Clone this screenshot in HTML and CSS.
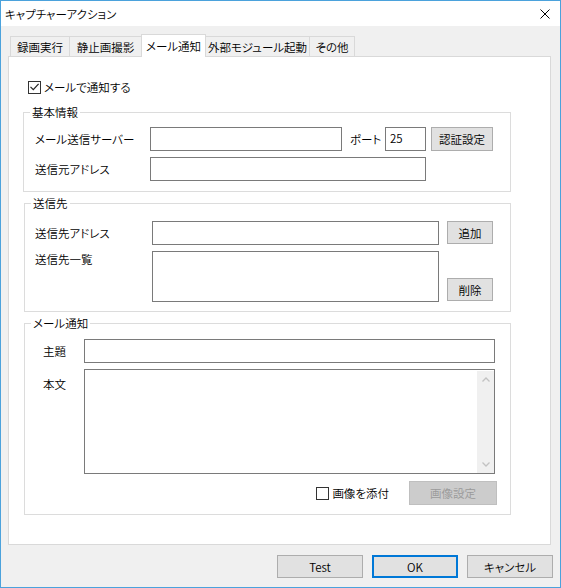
FILE: index.html
```html
<!DOCTYPE html>
<html lang="ja">
<head>
<meta charset="utf-8">
<title>キャプチャーアクション</title>
<link rel="stylesheet" href="styles.css">
</head>
<body>
<div class="window">
  <div class="titlebar">
    <span class="title">キャプチャーアクション</span>
    <svg class="close" width="10" height="10" viewBox="0 0 10 10"><path d="M0.5 0.5 L9.5 9.5 M9.5 0.5 L0.5 9.5" stroke="#000" stroke-width="1" fill="none"/></svg>
  </div>
  <div class="client">
    <div class="tabs">
      <div class="tab tab-rec">録画実行</div>
      <div class="tab tab-still">静止画撮影</div>
      <div class="tab tab-mail active">メール通知</div>
      <div class="tab tab-ext">外部モジュール起動</div>
      <div class="tab tab-other">その他</div>
    </div>
    <div class="panel">
      <label class="check top-check"><span class="box"><svg width="11" height="11" viewBox="0 0 11 11"><polyline points="1.5,4.8 4.3,7.6 9.6,1.8" fill="none" stroke="#222" stroke-width="1.2"/></svg></span>メールで通知する</label>

      <fieldset class="group g1">
        <legend>基本情報</legend>
        <div class="row">
          <span class="lbl lbl-basic">メール送信サーバー</span>
          <input class="field in-server" type="text" value="">
          <span class="port-label">ポート</span>
          <input class="field in-port" type="text" value="25">
          <button class="btn btn-auth">認証設定</button>
        </div>
        <div class="row">
          <span class="lbl lbl-basic">送信元アドレス</span>
          <input class="field in-from" type="text" value="">
        </div>
      </fieldset>

      <fieldset class="group g2">
        <legend>送信先</legend>
        <div class="row">
          <span class="lbl lbl-dest">送信先アドレス</span>
          <input class="field in-to" type="text" value="">
          <button class="btn btn-small btn-add">追加</button>
        </div>
        <div class="row row-top">
          <span class="lbl lbl-dest">送信先一覧</span>
          <div class="listbox"></div>
          <button class="btn btn-small btn-del">削除</button>
        </div>
      </fieldset>

      <fieldset class="group g3">
        <legend>メール通知</legend>
        <div class="row">
          <span class="lbl lbl-mail">主題</span>
          <input class="field in-subject" type="text" value="">
        </div>
        <div class="row row-top">
          <span class="lbl lbl-mail lbl-body">本文</span>
          <div class="textbox">
            <div class="textbox-content"></div>
            <div class="vscroll">
              <span class="arrow"><svg width="8" height="5" viewBox="0 0 8 5"><path d="M0.5 4.5 L4 1 L7.5 4.5" fill="none" stroke="#c2c2c2" stroke-width="1.3"/></svg></span>
              <span class="arrow"><svg width="8" height="5" viewBox="0 0 8 5"><path d="M0.5 0.5 L4 4 L7.5 0.5" fill="none" stroke="#c2c2c2" stroke-width="1.3"/></svg></span>
            </div>
          </div>
        </div>
        <div class="row row-end">
          <label class="check attach"><span class="box"></span>画像を添付</label>
          <button class="btn btn-img" disabled>画像設定</button>
        </div>
      </fieldset>
    </div>
    <div class="footer">
      <button class="btn btn-foot">Test</button>
      <button class="btn btn-foot btn-default">OK</button>
      <button class="btn btn-foot">キャンセル</button>
    </div>
  </div>
</div>
</body>
</html>
```
FILE: styles.css
```css
* { box-sizing: border-box; }
html, body { margin: 0; padding: 0; }
body {
  width: 561px;
  height: 588px;
  overflow: hidden;
  background: #fff;
  color: #000;
  font-family: "Noto Sans CJK JP", "Noto Sans", sans-serif;
  font-size: 11.5px;
  font-weight: 350;
  line-height: 16px;
  font-feature-settings: "palt";
}
.window {
  width: 561px;
  height: 588px;
  border: 1px solid #4ba2dc;
  background: #f0f0f0;
  display: flex;
  flex-direction: column;
}
.titlebar {
  flex: none;
  height: 25px;
  background: #fff;
  display: flex;
  align-items: center;
  justify-content: space-between;
  padding: 0 10px 0 4px;
}
.close { display: block; }
.client {
  flex: 1;
  min-height: 0;
  display: flex;
  flex-direction: column;
  padding: 8px 7px 9px 7px;
}
.tabs {
  flex: none;
  height: 22px;
  display: flex;
  align-items: flex-end;
  padding-left: 2px;
}
.tab {
  height: 20px;
  border: 1px solid #d9d9d9;
  border-bottom: none;
  margin-left: -1px;
  background: #f0f0f0;
  display: flex;
  align-items: center;
  justify-content: center;
  white-space: nowrap;
}
.tab:first-child { margin-left: 0; }
.tab-rec { width: 60px; }
.tab-still { width: 73px; }
.tab-mail { width: 65px; }
.tab-ext { width: 105px; }
.tab-other { width: 46px; }
.tab.active {
  height: 23px;
  margin-bottom: -1px;
  background: #fff;
  position: relative;
  z-index: 1;
}
.panel {
  flex: 1;
  min-height: 0;
  margin-right: 2px;
  background: #fff;
  border: 1px solid #d9d9d9;
}
.check {
  display: flex;
  align-items: center;
  width: max-content;
  height: 16px;
  white-space: nowrap;
}
.box {
  width: 13px;
  height: 13px;
  border: 1px solid #333;
  background: #fff;
  margin-right: 3px;
  display: flex;
}
.box svg { display: block; }
.top-check { margin: 22px 0 0 19px; }

.group {
  margin: 3px 0 0 15px;
  width: 487px;
  padding: 0;
  border: 1px solid #dcdcdc;
  min-inline-size: 0;
}
.group legend {
  margin-left: 6px;
  padding: 0 2px;
  height: 16px;
  line-height: 16px;
}
.g1 { margin: 9px 0 0 14px; width: 488px; padding: 7px 0 10px 0; }
.g2 { padding: 10px 0 9px 0; }
.g3 { padding: 8px 13px 9px 0; }
.g1 .row { padding-left: 11px; }
.g2 .row { padding-left: 10px; }
.g3 .row { padding-left: 18px; }

.row {
  display: flex;
  align-items: center;
  min-height: 24px;
}
.row + .row { margin-top: 6px; }
.row-top { align-items: flex-start; }
.row-end { justify-content: flex-end; }
.g3 .row-end { margin-top: 7px; }

.lbl { flex: none; white-space: nowrap; }
.lbl-basic { width: 115px; }
.lbl-dest { width: 117px; }
.lbl-mail { width: 41px; }
.lbl-body { margin-top: 7px; }

.field {
  flex: none;
  height: 24px;
  border: 1px solid #7a7a7a;
  background: #fff;
  padding: 0 4px;
  margin: 0;
  font: inherit;
  font-feature-settings: "palt";
  color: #000;
  outline: none;
}
.in-server { width: 192px; }
.port-label { margin-left: 8px; width: 35px; white-space: nowrap; }
.in-port { width: 41px; padding-bottom: 3px; }
.in-from { width: 276px; }
.in-to { width: 287px; }
.in-subject { width: 411px; }
.listbox {
  width: 287px;
  height: 51px;
  border: 1px solid #7a7a7a;
  background: #fff;
}
.textbox {
  width: 411px;
  height: 105px;
  border: 1px solid #7a7a7a;
  background: #fff;
  display: flex;
  padding-top: 1px;
}
.textbox-content { flex: 1; }
.vscroll {
  width: 17px;
  background: #f0f0f0;
  display: flex;
  flex-direction: column;
  justify-content: space-between;
}
.arrow {
  height: 17px;
  display: flex;
  align-items: center;
  justify-content: center;
}
.arrow svg { display: block; }

.btn {
  flex: none;
  margin: 0;
  padding: 0;
  font: inherit;
  font-feature-settings: "palt";
  color: #000;
  background: #e1e1e1;
  border: 1px solid #adadad;
  height: 24px;
  line-height: 16px;
}
.btn-auth { width: 62px; margin-left: 5px; }
.btn-small { width: 46px; height: 23px; margin-left: 8px; }
.btn-add { margin-top: -1px; }
.btn-del { align-self: flex-end; margin-bottom: 1px; }
.attach { margin-right: 20px; }
.btn-img {
  width: 88px;
  background: #cccccc;
  border-color: #bfbfbf;
  color: #9a9a9a;
}
.footer {
  flex: none;
  display: flex;
  justify-content: flex-end;
  gap: 9px;
  margin-top: 10px;
}
.btn-foot { width: 86px; height: 23px; }
.btn-default { border: 2px solid #0078d7; }
```
